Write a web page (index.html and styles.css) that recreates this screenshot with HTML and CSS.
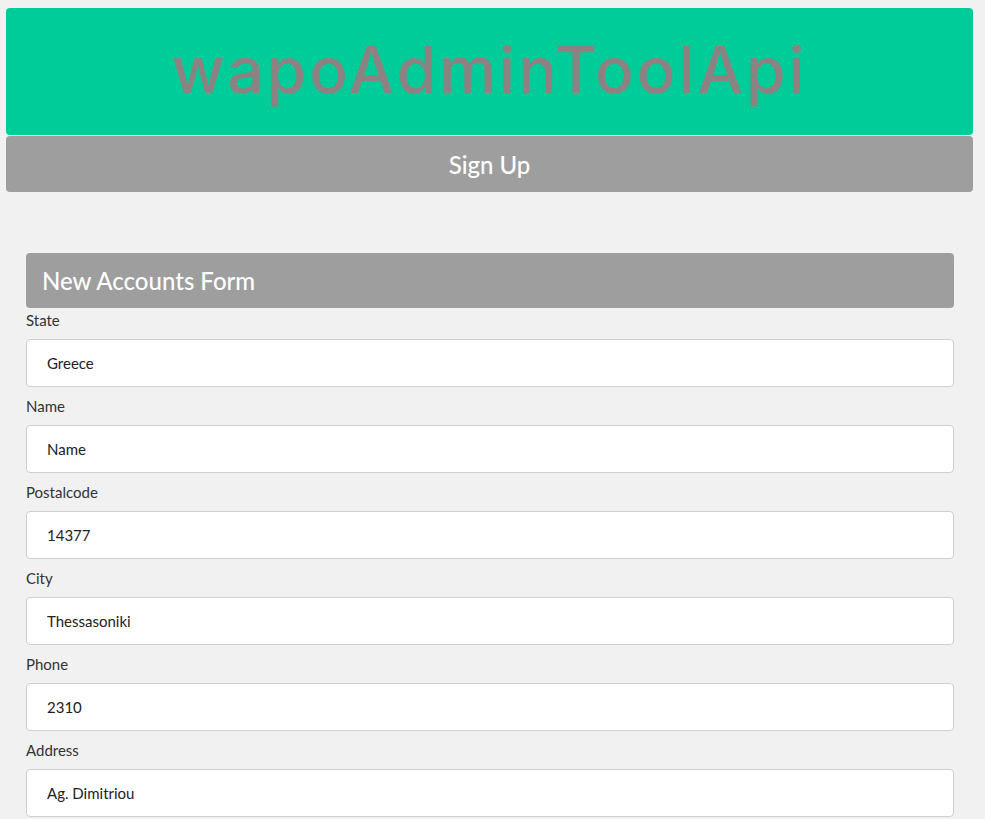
FILE: index.html
```html
<!DOCTYPE html>
<html lang="en">
<head>
    <meta charset="UTF-8">
    <meta name="viewport" content="width=device-width, initial-scale=1.0">
    <title>wapoAdminToolApi</title>
    <link rel="stylesheet" href="styles.css">
</head>
<body>
    <div class="brand">
        <h1>wapoAdminToolApi</h1>
    </div>
    <div class="page-bar">
        <h2>Sign Up</h2>
    </div>

    <div class="form-section">
        <div class="form-title">
            <h3>New Accounts Form</h3>
        </div>
        <form class="accounts-form">
            <label for="state">State</label>
            <input id="state" type="text" value="Greece">

            <label for="name">Name</label>
            <input id="name" type="text" placeholder="Name">

            <label for="postalcode">Postalcode</label>
            <input id="postalcode" type="text" value="14377">

            <label for="city">City</label>
            <input id="city" type="text" value="Thessasoniki">

            <label for="phone">Phone</label>
            <input id="phone" type="text" value="2310">

            <label for="address">Address</label>
            <input id="address" type="text" value="Ag. Dimitriou">
        </form>
    </div>
</body>
</html>
```

FILE: styles.css
```css
body {
    margin: 0;
    padding: 8px 12px 0 6px;
    background-color: #f1f1f1;
    color: #333;
    font-family: Lato, "Open Sans", sans-serif;
}

.brand {
    background-color: #00cc99;
    border-radius: 4px;
    height: 127px;
    display: flex;
    align-items: center;
    justify-content: center;
}

.brand h1 {
    margin: 0 0 4px 0;
    font-family: Inter, Lato, sans-serif;
    font-weight: 500;
    font-size: 64px;
    letter-spacing: 3px;
    color: #8c8282;
    line-height: 1;
}

.page-bar {
    background-color: #9e9e9e;
    border-radius: 4px;
    height: 56px;
    margin-top: 1px;
    display: flex;
    align-items: center;
    justify-content: center;
}

.page-bar h2 {
    margin: 0;
    font-size: 24px;
    font-weight: 500;
    color: white;
}

.form-section {
    margin: 61px 19px 0 20px;
}

.form-title {
    background-color: #9e9e9e;
    border-radius: 4px;
    height: 55px;
    padding: 0 16px;
    display: flex;
    align-items: center;
    margin-bottom: 2px;
}

.form-title h3 {
    margin: 0;
    font-size: 24px;
    font-weight: 500;
    color: white;
}

.accounts-form label {
    display: block;
    font-size: 15px;
    line-height: 20px;
    margin-bottom: 9px;
    color: #333;
}

.accounts-form input {
    display: block;
    box-sizing: border-box;
    width: 100%;
    height: 48px;
    margin: 0 0 9px 0;
    padding: 0 20px;
    border: 1px solid #cfcfcf;
    border-radius: 4px;
    background-color: white;
    font-family: Lato, sans-serif;
    font-size: 15px;
    color: #222;
}

.accounts-form input::placeholder {
    color: #222;
}
```
